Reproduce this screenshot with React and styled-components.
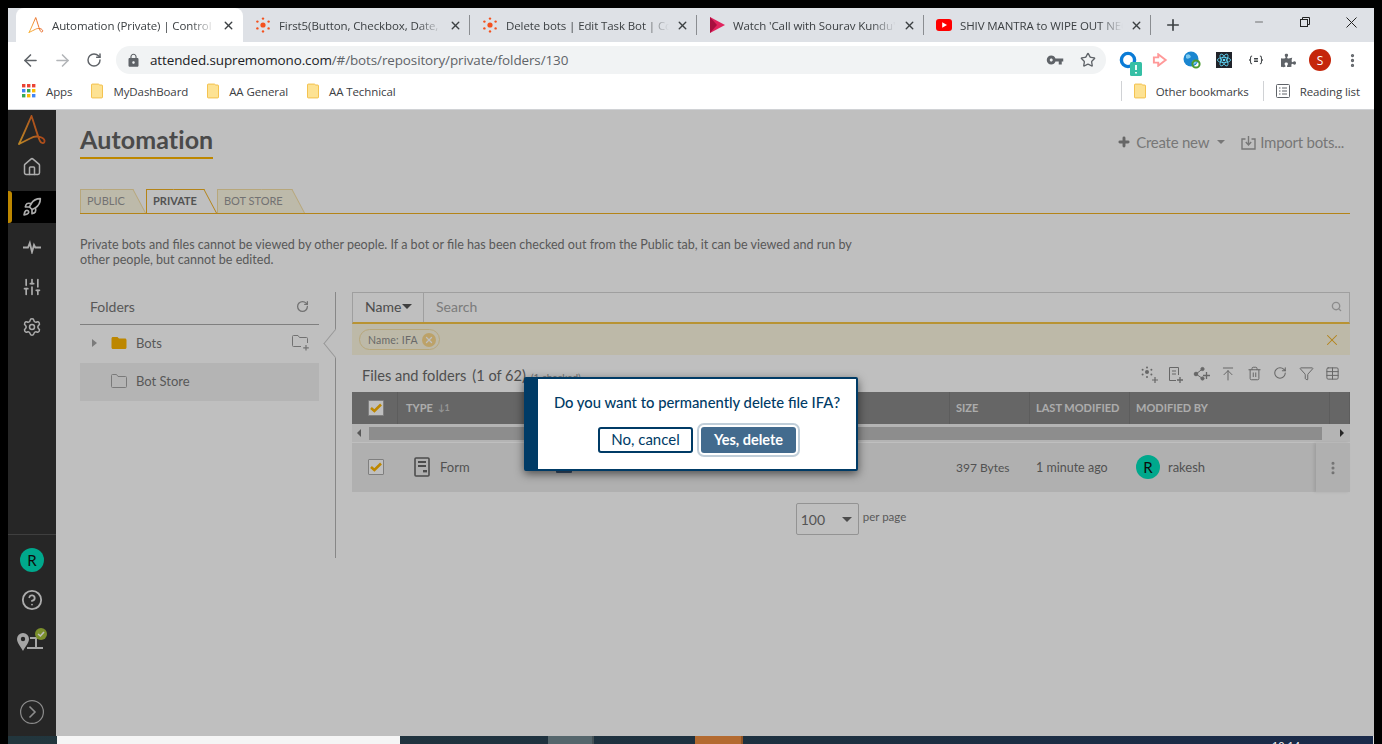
import React from 'react'
import styled, { createGlobalStyle } from 'styled-components'
import {
  ArrowLeft, ArrowRight, ArrowUpToLine, CircleHelp, EllipsisVertical, Funnel,
  House, Minus, Plus, Rocket, RotateCw, Search, Settings, SlidersVertical, Star, Table, Trash2, X,
} from 'lucide-react'
import { MdFolder, MdLock, MdVpnKey } from 'react-icons/md'
import { FaPuzzlePiece } from 'react-icons/fa'

const GlobalStyle = createGlobalStyle`
  html, body { margin: 0; padding: 0; background: #000; }
  * { box-sizing: border-box; }
`

const Frame = styled.div`
  width: 1382px;
  height: 744px;
  overflow: hidden;
  background: #000;
  padding: 8px 8px 0;
  display: flex;
  flex-direction: column;
  font-family: "Lato", "Liberation Sans", sans-serif;
`

/* browser chrome */
const TabStrip = styled.div`
  height: 34px;
  flex: none;
  background: #dee1e6;
  display: flex;
  align-items: stretch;
  padding-left: 8px;
  font-family: "Open Sans", "Liberation Sans", sans-serif;
`
const BrowserTab = styled.div`
  width: 227px;
  display: flex;
  align-items: center;
  padding: 0 8px 0 12px;
  background: ${p => (p.$active ? '#fff' : 'transparent')};
  border-radius: ${p => (p.$active ? '8px 8px 0 0' : '0')};
  position: relative;
  &::after {
    content: '';
    display: ${p => (p.$sep ? 'block' : 'none')};
    position: absolute;
    right: 0;
    top: 7px;
    bottom: 7px;
    width: 1px;
    background: #8a8d91;
  }
`
const FaviconSlot = styled.span`
  width: 16px;
  height: 16px;
  flex: none;
  margin-right: 8px;
  display: flex;
  align-items: center;
  justify-content: center;
`
const TabTitle = styled.span`
  flex: 1;
  min-width: 0;
  white-space: nowrap;
  overflow: hidden;
  font-size: 11.5px;
  letter-spacing: -0.1px;
  color: #3c4043;
  -webkit-mask-image: linear-gradient(to right, #000 85%, transparent 100%);
  mask-image: linear-gradient(to right, #000 85%, transparent 100%);
`
const TabClose = styled.span`
  width: 14px;
  height: 14px;
  flex: none;
  margin-left: 6px;
  color: #3c4043;
  display: flex;
  align-items: center;
  justify-content: center;
`
const NewTab = styled.span`
  width: 44px;
  color: #3c4043;
  display: flex;
  align-items: center;
  justify-content: center;
`
const WindowButtons = styled.div`
  margin-left: auto;
  display: flex;
  color: #222;
  padding-top: 1px;
`
const WindowButton = styled.span`
  width: 46px;
  height: 26px;
  display: flex;
  align-items: center;
  justify-content: center;
`
const Toolbar = styled.div`
  height: 36px;
  flex: none;
  background: #fff;
  display: flex;
  align-items: center;
  padding: 0 0 0 6px;
`
const NavButton = styled.span`
  width: 32px;
  height: 32px;
  flex: none;
  color: ${p => (p.$off ? '#b2b5b8' : '#5f6368')};
  display: flex;
  align-items: center;
  justify-content: center;
`
const AddressBar = styled.div`
  width: 990px;
  height: 28px;
  margin-left: 6px;
  border-radius: 14px;
  background: #f1f3f4;
  display: flex;
  align-items: center;
  padding: 0 2px 0 10px;
  color: #5f6368;
`
const Url = styled.span`
  margin-left: 9px;
  flex: 1;
  font-family: "Open Sans", "Liberation Sans", sans-serif;
  font-size: 13.45px;
  letter-spacing: -0.1px;
  color: #5f6368;
  b { font-weight: 400; color: #202124; }
`
const AddressIcon = styled.span`
  width: 33px;
  display: flex;
  justify-content: center;
  align-items: center;
`
const Extensions = styled.div`
  display: flex;
  align-items: center;
  margin-left: 6px;
`
const ExtSlot = styled.span`
  width: 32px;
  height: 24px;
  display: flex;
  align-items: center;
  justify-content: center;
  position: relative;
`
const ProfileBadge = styled.span`
  width: 22px;
  height: 22px;
  border-radius: 50%;
  background: #c5260b;
  color: #fff;
  font-size: 12px;
  font-family: "Open Sans", sans-serif;
  display: flex;
  align-items: center;
  justify-content: center;
`
const Bookmarks = styled.div`
  height: 32px;
  flex: none;
  background: #fff;
  border-bottom: 1px solid #d0d2d5;
  display: flex;
  align-items: center;
  padding: 0 0 5px 14px;
  font-family: "Open Sans", "Liberation Sans", sans-serif;
  font-size: 11.5px;
  letter-spacing: -0.1px;
  color: #3c4043;
`
const Bookmark = styled.span`
  display: flex;
  align-items: center;
  gap: 10px;
  margin-right: ${p => p.$mr ?? 19}px;
`
const BookmarkSep = styled.span`
  width: 1px;
  height: 20px;
  background: #d0d2d5;
  margin-right: ${p => p.$gap}px;
  margin-left: ${p => (p.$auto ? 'auto' : '0')};
`

/* page */
const Page = styled.div`
  flex: 1;
  min-height: 0;
  position: relative;
  display: flex;
  background: #fff;
`
const Sidebar = styled.nav`
  width: 48px;
  flex: none;
  background: #333;
  display: flex;
  flex-direction: column;
`
const LogoSlot = styled.div`
  height: 37px;
  padding: 5px 0 0 9px;
`
const SideIcon = styled.div`
  height: ${p => (p.$active ? 32 : 40)}px;
  margin: ${p => (p.$active ? '4px 0' : '0')};
  display: flex;
  align-items: center;
  justify-content: center;
  position: relative;
  background: ${p => (p.$active ? '#000' : 'transparent')};
  color: #e6e6e6;
  &::before {
    content: '';
    display: ${p => (p.$active ? 'block' : 'none')};
    position: absolute;
    left: 0;
    top: 0;
    bottom: 0;
    width: 4px;
    border-radius: 0 3px 3px 0;
    background: #fdb500;
  }
`
const SideBottom = styled.div`
  margin-top: auto;
  border-top: 1px solid #555;
  padding-top: 5px;
  display: flex;
  flex-direction: column;
`
const Avatar = styled.span`
  width: ${p => p.$size}px;
  height: ${p => p.$size}px;
  border-radius: 50%;
  background: #00e0bb;
  color: #111;
  font-size: 15px;
  display: flex;
  align-items: center;
  justify-content: center;
  flex: none;
`
const ExpandSlot = styled.div`
  margin-top: 40px;
  height: 36px;
  display: flex;
  justify-content: center;
`
const Main = styled.main`
  flex: 1;
  min-width: 0;
  padding: 13px 24px 0;
  color: #767676;
`
const HeaderRow = styled.header`
  display: flex;
  justify-content: space-between;
  align-items: flex-start;
`
const Title = styled.h1`
  margin: 0;
  font-size: 25px;
  line-height: 33px;
  letter-spacing: 0.1px;
  font-weight: 700;
  color: #636363;
  border-bottom: 2px solid #fdb500;
  padding-bottom: 1px;
`
const HeaderActions = styled.div`
  display: flex;
  align-items: center;
  margin: 10px 6px 0 0;
  font-size: 15px;
  letter-spacing: -0.25px;
  color: #9f9f9f;
`
const HeaderAction = styled.span`
  display: flex;
  align-items: center;
  gap: ${p => p.$gap}px;
`
const Caret = styled.i`
  display: inline-block;
  width: 0;
  height: 0;
  border-left: ${p => p.$s}px solid transparent;
  border-right: ${p => p.$s}px solid transparent;
  border-top: ${p => p.$s}px solid ${p => p.$c};
  margin-left: ${p => p.$ml || 0}px;
  margin-right: ${p => p.$mr || 0}px;
`
const TabRow = styled.div`
  margin-top: 30px;
  height: 25px;
  display: flex;
  border-bottom: 1px solid #f0b020;
`
const Tab = styled.div`
  position: relative;
  height: 24px;
  width: ${p => p.$w}px;
  padding-left: 7px;
  font-size: 11px;
  line-height: 24px;
  text-transform: uppercase;
  font-weight: ${p => (p.$active ? 700 : 400)};
  color: ${p => (p.$active ? '#6e6e6e' : '#999')};
  z-index: ${p => (p.$active ? 2 : 1)};
  span { position: relative; z-index: 2; }
  &::before, &::after {
    content: '';
    position: absolute;
    top: 0;
    bottom: 0;
    background: ${p => (p.$active ? '#fff' : '#fdf8e3')};
    border-top: 1px solid ${p => (p.$active ? '#f0b020' : '#f5dfa5')};
  }
  &::before {
    left: 0;
    right: 20px;
    border-left: 1px solid ${p => (p.$active ? '#f0b020' : '#f5dfa5')};
  }
  &::after {
    right: 0;
    width: 30px;
    border-right: 1px solid ${p => (p.$active ? '#f0b020' : '#f5dfa5')};
    transform: skewX(28deg);
    transform-origin: bottom right;
  }
`
const Description = styled.p`
  margin: 23px 0 0;
  width: 780px;
  font-size: 12.55px;
  line-height: 15px;
  color: #767676;
`
const Columns = styled.div`
  margin-top: 25px;
  display: flex;
  align-items: flex-start;
`
const FoldersPanel = styled.aside`
  width: 239px;
  flex: none;
`
const FoldersHead = styled.div`
  height: 33px;
  display: flex;
  align-items: center;
  justify-content: space-between;
  padding: 0 10px 3px;
  border-bottom: 1px solid #aaa;
  font-size: 14px;
  color: #767676;
  svg { color: #999; }
`
const FolderRow = styled.div`
  height: 38px;
  display: flex;
  align-items: center;
  padding: 0 0 2px 12px;
  font-size: 13px;
  background: ${p => (p.$selected ? '#f0f0f0' : 'transparent')};
  color: #767676;
`
const TreeArrow = styled.i`
  width: 0;
  height: 0;
  border-top: 4px solid transparent;
  border-bottom: 4px solid transparent;
  border-left: 5px solid #a5a5a5;
  margin-right: 13px;
`
const FolderLabel = styled.span`
  margin-left: ${p => p.$ml}px;
  flex: 1;
`
const TreeIndent = styled.span`
  width: 19px;
`
const AddFolder = styled.span`
  margin-right: 9px;
  display: flex;
`
const Divider = styled.div`
  width: 1px;
  height: 266px;
  flex: none;
  margin: 0 16px;
  background: #b5b5b5;
  position: relative;
  &::before {
    content: '';
    position: absolute;
    left: -9px;
    top: 42px;
    width: 18px;
    height: 18px;
    background: #fff;
    border-left: 1px solid #ccc;
    border-bottom: 1px solid #ccc;
    transform: rotate(45deg) skew(6deg, 6deg);
  }
`
const FilesPanel = styled.section`
  flex: 1;
  min-width: 0;
`
const SearchBar = styled.div`
  height: 32px;
  display: flex;
  border: 1px solid #d5d5d5;
  border-bottom: 2px solid #f6c544;
  font-size: 14px;
`
const SearchField = styled.div`
  width: 71px;
  display: flex;
  align-items: center;
  padding: 0 0 2px 12px;
  border-right: 1px solid #d5d5d5;
  color: #666;
`
const SearchInput = styled.div`
  flex: 1;
  display: flex;
  align-items: center;
  justify-content: space-between;
  padding: 0 7px 2px 12px;
  color: #a5a5a5;
`
const ChipBar = styled.div`
  height: 31px;
  background: #fcf7e0;
  display: flex;
  align-items: center;
  justify-content: space-between;
  padding: 0 9px 0 7px;
  color: #f0b020;
`
const Chip = styled.span`
  height: 21px;
  padding: 0 3px 0 8px;
  border: 1px solid #f5dfa5;
  border-radius: 11px;
  display: flex;
  align-items: center;
  gap: 4px;
  font-size: 10.5px;
  letter-spacing: 0.2px;
  color: #8c8c8c;
`
const ChipClose = styled.span`
  width: 14px;
  height: 14px;
  border-radius: 50%;
  background: #fbd98d;
  color: #fff;
  display: flex;
  align-items: center;
  justify-content: center;
`
const FilesHead = styled.div`
  height: 37px;
  display: flex;
  align-items: center;
  padding: 3px 5px 0 10px;
  font-size: 14.6px;
  color: #6a6a6a;
`
const Count = styled.span`
  margin-left: 6px;
`
const Checked = styled.small`
  margin: 3px 0 0 5px;
  font-size: 10px;
  color: #999;
`
const IconActions = styled.div`
  margin-left: auto;
  display: flex;
  color: #8a8a8a;
`
const IconAction = styled.span`
  width: 26px;
  display: flex;
  justify-content: center;
`
const columns = '46px 150px 402px 80px 100px 200px 20px'
const TableHead = styled.div`
  height: 32px;
  display: grid;
  grid-template-columns: ${columns};
  background: #888;
  font-size: 11px;
  font-weight: 700;
  color: #e6e6e6;
`
const HeadCell = styled.div`
  display: flex;
  align-items: center;
  gap: 5px;
  padding: 0 0 ${p => (p.$center ? 0 : 2)}px ${p => p.$pl ?? 6}px;
  justify-content: ${p => (p.$center ? 'center' : 'flex-start')};
  border-right: 1px solid #7c7c7c;
`
const SortMark = styled.span`
  font-size: 9px;
  color: #c8c8c8;
`
const CheckBox = styled.span`
  width: 16px;
  height: 16px;
  border: 1px solid #aaa;
  background: #fff;
  border-radius: 1px;
  display: flex;
  align-items: center;
  justify-content: center;
`
const ScrollTrack = styled.div`
  height: 18px;
  display: flex;
  align-items: center;
  background: #f1f1f1;
  padding: 0 6px 0 5px;
`
const ScrollThumb = styled.div`
  flex: 1;
  height: 13px;
  background: #bdbdbd;
  margin: 0 18px 0 8px;
`
const ScrollArrow = styled.i`
  width: 0;
  height: 0;
  border-top: 4px solid transparent;
  border-bottom: 4px solid transparent;
  ${p => (p.$right ? 'border-left: 4px solid #333;' : 'border-right: 4px solid #777;')}
`
const TableRow = styled.div`
  margin-top: 1px;
  height: 49px;
  display: grid;
  grid-template-columns: ${columns};
  background: #ebebeb;
  font-size: 13px;
  color: #6e6e6e;
`
const Cell = styled.div`
  display: flex;
  align-items: center;
  padding: 0 0 1px ${p => p.$pl ?? 6}px;
  gap: ${p => p.$gap || 0}px;
  justify-content: ${p => (p.$center ? 'center' : 'flex-start')};
  font-size: ${p => p.$fs || 13}px;
  white-space: nowrap;
`
const RowMenu = styled.div`
  margin-left: -14px;
  width: 34px;
  display: flex;
  align-items: center;
  justify-content: center;
  background: #ebebeb;
  color: #999;
  box-shadow: -2px 0 3px rgba(0, 0, 0, 0.1);
`
const Pager = styled.div`
  margin-top: 11px;
  display: flex;
  justify-content: center;
  align-items: flex-start;
  gap: 4px;
`
const PageSelect = styled.div`
  width: 63px;
  height: 32px;
  border: 1px solid #c4c4c4;
  border-radius: 2px;
  display: flex;
  align-items: center;
  justify-content: space-between;
  padding: 0 6px 0 4px;
  font-size: 14px;
  color: #707070;
`
const PerPage = styled.span`
  font-size: 11.5px;
  margin-top: 7px;
  color: #787878;
`

/* dialog */
const Overlay = styled.div`
  position: absolute;
  inset: 0;
  z-index: 10;
  background: rgba(0, 0, 0, 0.25);
  display: flex;
  justify-content: center;
  align-items: flex-start;
  padding-top: 267px;
`
const Dialog = styled.div`
  width: 334px;
  height: 94px;
  display: flex;
  background: #fff;
  border: 2px solid #003b66;
  border-left-width: 14px;
  border-radius: 2px;
  box-shadow: 0 3px 10px rgba(0, 0, 0, 0.55);
`
const DialogBody = styled.div`
  flex: 1;
  padding-top: 13px;
  display: flex;
  flex-direction: column;
  align-items: center;
`
const Question = styled.p`
  margin: 0;
  font-size: 14.8px;
  line-height: 20px;
  font-weight: 500;
  color: #003b66;
`
const ButtonRow = styled.div`
  display: flex;
  gap: 8px;
  margin-top: 15px;
`
const Button = styled.button`
  width: 95px;
  height: 26px;
  padding: 0 0 2px;
  border-radius: 3px;
  font-family: inherit;
  font-size: ${p => (p.$primary ? 14.5 : 15)}px;
  border: ${p => (p.$primary ? '0' : '2px solid #003b66')};
  background: ${p => (p.$primary ? '#436b8e' : '#fff')};
  color: ${p => (p.$primary ? '#fff' : '#003b66')};
  font-weight: ${p => (p.$primary ? 700 : 400)};
  box-shadow: ${p => (p.$primary ? '0 0 0 2px #fff, 0 0 0 4px #c0ced9' : 'none')};
`

/* taskbar */
const Taskbar = styled.footer`
  height: 8px;
  flex: none;
  display: flex;
  overflow: hidden;
  background: linear-gradient(to right, #22363d, #1d3040 60%, #1a2a4a);
  border-right: 1px solid #ddd;
`
const TaskStart = styled.span`
  width: 49px;
  flex: none;
`
const TaskWhite = styled.span`
  width: 343px;
  flex: none;
  background: #f5f5f5;
`
const TaskItem = styled.span`
  width: ${p => p.$w}px;
  margin-left: ${p => p.$ml}px;
  flex: none;
  background: ${p => p.$c};
  border-right: 2px solid rgba(0, 0, 0, 0.2);
`
const Clock = styled.span`
  margin-left: 529px;
  padding-top: 3px;
  font-family: "Open Sans", sans-serif;
  font-size: 11px;
  line-height: 14px;
  color: #fff;
`

const LogoMark = ({ size }) => (
  <svg width={size} height={size} viewBox="0 0 28 30" fill="none">
    <defs>
      <linearGradient id={`aa${size}`} x1="0" y1="1" x2="1" y2="0.6">
        <stop offset="0" stopColor="#f9b233" />
        <stop offset="0.55" stopColor="#f08a2c" />
        <stop offset="1" stopColor="#e2531f" />
      </linearGradient>
    </defs>
    <path
      d="M1 29 C5 21 10 9 13.5 1 C16 8 19 19 21.5 25 C23 29 27 29 26.5 25.5 C26 22 18 20 13 23 C9 25 5 27 1 29"
      stroke={`url(#aa${size})`}
      strokeWidth="1.8"
      strokeLinecap="round"
    />
  </svg>
)

const HubIcon = () => (
  <svg width="16" height="16" viewBox="0 0 16 16" fill="#f4511e">
    <circle cx="8" cy="8" r="2.6" />
    <circle cx="8" cy="1.6" r="1.2" />
    <circle cx="8" cy="14.4" r="1.2" />
    <circle cx="2.4" cy="4.6" r="1.2" />
    <circle cx="13.6" cy="4.6" r="1.2" />
    <circle cx="2.4" cy="11.4" r="1.2" />
    <circle cx="13.6" cy="11.4" r="1.2" />
  </svg>
)

const StreamIcon = () => (
  <svg width="16" height="16" viewBox="0 0 16 16">
    <path d="M1 0 L16 8 L1 16 Z" fill="#e0245e" />
    <path d="M1 0 L8 8 L1 16 Z" fill="#a80f3f" />
  </svg>
)

const YoutubeIcon = () => (
  <svg width="16" height="12" viewBox="0 0 16 12">
    <rect width="16" height="12" rx="3" fill="#f00" />
    <path d="M6.2 3.2 L11 6 L6.2 8.8 Z" fill="#fff" />
  </svg>
)

const AppsIcon = () => {
  const colors = ['#ea4335', '#ea4335', '#ea4335', '#4285f4', '#34a853', '#fbbc04', '#34a853', '#fbbc04', '#4285f4']
  return (
    <svg width="14" height="14" viewBox="0 0 14 14">
      {colors.map((c, i) => (
        <rect key={i} x={(i % 3) * 5} y={Math.floor(i / 3) * 5} width="3.4" height="3.4" fill={c} />
      ))}
    </svg>
  )
}

const BookmarkFolder = () => (
  <svg width="12" height="16" viewBox="0 0 13 16">
    <path d="M1.5 .5 H8 L9.5 1.5 H11.5 A1 1 0 0 1 12.5 2.5 V14.5 A1 1 0 0 1 11.5 15.5 H1.5 A1 1 0 0 1 .5 14.5 V1.5 A1 1 0 0 1 1.5 .5 Z" fill="#fde293" stroke="#f2bd42" />
  </svg>
)

const ReadingIcon = () => (
  <svg width="14" height="14" viewBox="0 0 14 14" fill="none" stroke="#5f6368">
    <rect x=".5" y=".5" width="13" height="13" rx="1" />
    <path d="M3 4 H4.5 M6 4 H11 M3 7 H4.5 M6 7 H11 M3 10 H4.5 M6 10 H11" />
  </svg>
)

const ExtRing = () => (
  <>
    <svg width="18" height="18" viewBox="0 0 18 18" fill="none">
      <circle cx="9" cy="9" r="6.6" stroke="#0a7bd6" strokeWidth="3.4" />
    </svg>
    <svg width="12" height="14" viewBox="0 0 12 14" style={{ position: 'absolute', right: 2, bottom: -4 }}>
      <rect width="12" height="14" rx="1.5" fill="#35bfa5" />
      <path d="M6 3 V8 M6 10 V11.4" stroke="#fff" strokeWidth="1.8" />
    </svg>
  </>
)

const ExtArrow = () => (
  <svg width="16" height="14" viewBox="0 0 18 16" fill="none" stroke="#f99" strokeWidth="2.2">
    <path d="M2 5 H7 L7 1.5 L15.5 8 L7 14.5 L7 11 H2 Z" />
  </svg>
)

const ExtGlobe = () => (
  <svg width="18" height="18" viewBox="0 0 18 18">
    <circle cx="8" cy="8" r="7.5" fill="#1a86d0" />
    <path d="M3 4 Q7 2 8 6 Q5 9 3 7 Z M9 10 Q13 8 14 11 Q11 15 9 13 Z" fill="#7cc9ef" />
    <circle cx="13" cy="13" r="3.6" fill="none" stroke="#4a9a2e" strokeWidth="2" />
  </svg>
)

const ExtReact = () => (
  <svg width="16" height="16" viewBox="0 0 16 16">
    <rect width="16" height="16" fill="#20232a" />
    <g fill="none" stroke="#61dafb" strokeWidth=".8">
      <ellipse cx="8" cy="8" rx="6.6" ry="2.6" />
      <ellipse cx="8" cy="8" rx="6.6" ry="2.6" transform="rotate(60 8 8)" />
      <ellipse cx="8" cy="8" rx="6.6" ry="2.6" transform="rotate(120 8 8)" />
    </g>
    <circle cx="8" cy="8" r="1.3" fill="#61dafb" />
  </svg>
)

const ExtBraces = () => (
  <svg width="14" height="10" viewBox="0 0 18 12" fill="none" stroke="#3c4043" strokeWidth="1.3">
    <path d="M4 1 Q2 1 2 3 V5 L.8 6 L2 7 V9 Q2 11 4 11 M14 1 Q16 1 16 3 V5 L17.2 6 L16 7 V9 Q16 11 14 11" />
    <path d="M6.5 4 H11.5 M6.5 6 H11.5 M6.5 8 H11.5" />
  </svg>
)

const RestoreIcon = () => (
  <svg width="10" height="10" viewBox="0 0 10 10" fill="none" stroke="#222">
    <rect x=".5" y="2.5" width="7" height="7" />
    <path d="M2.5 2.5 V.5 H9.5 V7.5 H7.5" />
  </svg>
)

const CloseThin = () => (
  <svg width="11" height="11" viewBox="0 0 11 11" stroke="#222">
    <path d="M.5 .5 L10.5 10.5 M10.5 .5 L.5 10.5" />
  </svg>
)

const PulseIcon = () => (
  <svg width="18" height="14" viewBox="0 0 18 14" fill="none" stroke="currentColor" strokeWidth="1.8">
    <path d="M0 7.5 H5 L6.8 3 L9 12 L11 5 L12.3 7.5 H18" />
  </svg>
)

const ExpandIcon = () => (
  <svg width="24" height="24" viewBox="0 0 24 24" fill="none" stroke="#bbb" strokeWidth="1.2">
    <circle cx="12" cy="12" r="11.4" />
    <path d="M9.5 6.5 L15 12 L9.5 17.5" strokeWidth="1.6" />
  </svg>
)

const OutlineFolder = () => (
  <svg width="16" height="14" viewBox="0 0 16 14" fill="none" stroke="#a3a3a3">
    <path d="M.5 1.5 A1 1 0 0 1 1.5 .5 H5.5 L7 2.5 H14.5 A1 1 0 0 1 15.5 3.5 V12.5 A1 1 0 0 1 14.5 13.5 H1.5 A1 1 0 0 1 .5 12.5 Z" />
  </svg>
)

const FolderPlus = () => (
  <svg width="18" height="16" viewBox="0 0 18 16" fill="none" stroke="#999">
    <path d="M9 11.5 H1.5 A1 1 0 0 1 .5 10.5 V1.5 A1 1 0 0 1 1.5 .5 H6 L7.5 2.5 H14.5 A1 1 0 0 1 15.5 3.5 V8" />
    <path d="M14 10 V15.5 M11.2 12.8 H16.8" strokeWidth="1.2" />
  </svg>
)

const ImportIcon = () => (
  <svg width="15" height="15" viewBox="0 0 15 15" fill="none" stroke="#9f9f9f" strokeWidth="1.4">
    <path d="M4.5 4 H1 V14 H14 V4 H10.5" />
    <path d="M7.5 1 V9.5 M4.8 7 L7.5 10 L10.2 7" />
  </svg>
)

const ClusterPlus = () => (
  <svg width="18" height="18" viewBox="0 0 18 18" fill="#8a8a8a">
    <circle cx="6" cy="6" r="2" />
    <circle cx="6" cy="1.4" r="1" />
    <circle cx="1.6" cy="3.8" r="1" />
    <circle cx="10.4" cy="3.8" r="1" />
    <circle cx="1.6" cy="8.4" r="1" />
    <circle cx="10.4" cy="8.4" r="1" />
    <circle cx="6" cy="11" r="1" />
    <path d="M14 11 V17 M11 14 H17" stroke="#8a8a8a" strokeWidth="1.2" />
  </svg>
)

const FilePlus = () => (
  <svg width="16" height="18" viewBox="0 0 16 18" fill="none" stroke="#8a8a8a">
    <path d="M8 14.5 H1.5 V1.5 H10.5 V9" />
    <path d="M4 5 H8 M4 8 H8" />
    <path d="M12 11 V17 M9 14 H15" strokeWidth="1.3" />
  </svg>
)

const SharePlus = () => (
  <svg width="18" height="18" viewBox="0 0 18 18" fill="#8a8a8a" stroke="#8a8a8a">
    <circle cx="3" cy="8" r="1.8" />
    <circle cx="9.5" cy="3" r="1.6" />
    <circle cx="9.5" cy="12.5" r="1.6" />
    <path d="M3 8 L9.5 3 M3 8 L9.5 12.5" fill="none" />
    <path d="M13.5 6 V13 M10 9.5 H17" strokeWidth="1.3" fill="none" />
  </svg>
)

const CheckMark = () => (
  <svg width="12" height="10" viewBox="0 0 12 10" fill="none" stroke="#fdb500" strokeWidth="2.6">
    <path d="M1 5 L4.4 8 L11 1.5" />
  </svg>
)

const FormIcon = () => (
  <svg width="16" height="20" viewBox="0 0 16 20" fill="none" stroke="#666" strokeWidth="1.6">
    <rect x="1" y="1" width="14" height="18" rx="1" />
    <path d="M4 5 H12 M4 9 H12" strokeWidth="2" />
    <rect x="9" y="13" width="4" height="2.4" fill="#666" strokeWidth="0" />
  </svg>
)

const NameIcon = () => (
  <svg width="16" height="12" viewBox="0 0 16 12">
    <rect width="16" height="12" rx="1" fill="#4a6a90" />
  </svg>
)

const BotLocation = () => (
  <svg width="32" height="26" viewBox="0 0 32 26">
    <path d="M7 6 A6 6 0 0 1 13 12 C13 16 9 20 7 24 C5 20 1 16 1 12 A6 6 0 0 1 7 6 Z" fill="#ddd" />
    <circle cx="7" cy="12" r="2.2" fill="#333" />
    <path d="M14 10 H21 V20 H27 V22 H11 V20 H19 V12 H14 Z" fill="#ddd" />
    <circle cx="25" cy="7" r="6" fill="#a4bf3a" />
    <path d="M22 7 L24.4 9 L28 5" stroke="#fff" strokeWidth="1.6" fill="none" />
  </svg>
)

const tabs = [
  { title: 'Automation (Private) | Control Room', icon: <LogoMark size={16} />, active: true },
  { title: 'First5(Button, Checkbox, Date, Dropdown)', icon: <HubIcon />, sep: true },
  { title: 'Delete bots | Edit Task Bot | Community', icon: <HubIcon />, sep: true },
  { title: "Watch 'Call with Sourav Kundu' Stream", icon: <StreamIcon />, sep: true },
  { title: 'SHIV MANTRA to WIPE OUT NEGATIVE', icon: <YoutubeIcon />, sep: true },
]

const App = () => (
  <Frame>
    <GlobalStyle />
    <TabStrip>
      {tabs.map(t => (
        <BrowserTab key={t.title} $active={t.active} $sep={t.sep}>
          <FaviconSlot>{t.icon}</FaviconSlot>
          <TabTitle>{t.title}</TabTitle>
          <TabClose><X size={13} strokeWidth={2.6} /></TabClose>
        </BrowserTab>
      ))}
      <NewTab><Plus size={18} strokeWidth={2.2} /></NewTab>
      <WindowButtons>
        <WindowButton><Minus size={12} strokeWidth={1.2} color="#222" /></WindowButton>
        <WindowButton><RestoreIcon /></WindowButton>
        <WindowButton><CloseThin /></WindowButton>
      </WindowButtons>
    </TabStrip>
    <Toolbar>
      <NavButton><ArrowLeft size={19} /></NavButton>
      <NavButton $off><ArrowRight size={19} /></NavButton>
      <NavButton><RotateCw size={16} strokeWidth={2.2} /></NavButton>
      <AddressBar>
        <MdLock size={15} />
        <Url><b>attended.supremomono.com</b>/#/bots/repository/private/folders/130</Url>
        <AddressIcon><MdVpnKey size={18} /></AddressIcon>
        <AddressIcon><Star size={16} /></AddressIcon>
      </AddressBar>
      <Extensions>
        <ExtSlot><ExtRing /></ExtSlot>
        <ExtSlot><ExtArrow /></ExtSlot>
        <ExtSlot><ExtGlobe /></ExtSlot>
        <ExtSlot><ExtReact /></ExtSlot>
        <ExtSlot><ExtBraces /></ExtSlot>
        <ExtSlot><FaPuzzlePiece size={15} color="#5f6368" /></ExtSlot>
        <ExtSlot><ProfileBadge>S</ProfileBadge></ExtSlot>
        <ExtSlot><EllipsisVertical size={17} color="#5f6368" strokeWidth={2.6} /></ExtSlot>
      </Extensions>
    </Toolbar>
    <Bookmarks>
      <Bookmark><AppsIcon />Apps</Bookmark>
      <Bookmark><BookmarkFolder />MyDashBoard</Bookmark>
      <Bookmark><BookmarkFolder />AA General</Bookmark>
      <Bookmark><BookmarkFolder />AA Technical</Bookmark>
      <BookmarkSep $auto $gap={12} />
      <Bookmark $mr={14}><BookmarkFolder />Other bookmarks</Bookmark>
      <BookmarkSep $gap={12} />
      <Bookmark $mr={14}><ReadingIcon />Reading list</Bookmark>
    </Bookmarks>
    <Page>
      <Sidebar>
        <LogoSlot><LogoMark size={30} /></LogoSlot>
        <SideIcon><House size={20} strokeWidth={1.8} /></SideIcon>
        <SideIcon $active><Rocket size={20} strokeWidth={2} /></SideIcon>
        <SideIcon><PulseIcon /></SideIcon>
        <SideIcon><SlidersVertical size={20} strokeWidth={2} /></SideIcon>
        <SideIcon><Settings size={20} strokeWidth={1.8} /></SideIcon>
        <SideBottom>
          <SideIcon><Avatar $size={24}>R</Avatar></SideIcon>
          <SideIcon><CircleHelp size={22} strokeWidth={2} /></SideIcon>
          <SideIcon><BotLocation /></SideIcon>
          <ExpandSlot><ExpandIcon /></ExpandSlot>
        </SideBottom>
      </Sidebar>
      <Main>
        <HeaderRow>
          <Title>Automation</Title>
          <HeaderActions>
            <HeaderAction $gap={5}><Plus size={14} strokeWidth={5} color="#888" />Create new</HeaderAction>
            <Caret $s={4} $c="#9f9f9f" $ml={8} $mr={16} />
            <HeaderAction $gap={4}><ImportIcon />Import bots...</HeaderAction>
          </HeaderActions>
        </HeaderRow>
        <TabRow>
          <Tab $w={66}><span>Public</span></Tab>
          <Tab $w={71} $active><span>Private</span></Tab>
          <Tab $w={88}><span>Bot Store</span></Tab>
        </TabRow>
        <Description>
          Private bots and files cannot be viewed by other people. If a bot or file has been checked out from the Public tab, it can be viewed and run by other people, but cannot be edited.
        </Description>
        <Columns>
          <FoldersPanel>
            <FoldersHead>Folders<RotateCw size={13} strokeWidth={2.4} /></FoldersHead>
            <FolderRow>
              <TreeArrow />
              <MdFolder size={18} color="#fdb500" />
              <FolderLabel $ml={8}>Bots</FolderLabel>
              <AddFolder><FolderPlus /></AddFolder>
            </FolderRow>
            <FolderRow $selected>
              <TreeIndent />
              <OutlineFolder />
              <FolderLabel $ml={9}>Bot Store</FolderLabel>
            </FolderRow>
          </FoldersPanel>
          <Divider />
          <FilesPanel>
            <SearchBar>
              <SearchField>Name<Caret $s={5} $c="#555" $ml={1} /></SearchField>
              <SearchInput>Search<Search size={11} strokeWidth={3} color="#bbb" /></SearchInput>
            </SearchBar>
            <ChipBar>
              <Chip>Name: IFA<ChipClose><X size={10} strokeWidth={3} /></ChipClose></Chip>
              <X size={18} strokeWidth={1.4} />
            </ChipBar>
            <FilesHead>
              Files and folders
              <Count>(1 of 62)</Count>
              <Checked>(1 checked)</Checked>
              <IconActions>
                <IconAction><ClusterPlus /></IconAction>
                <IconAction><FilePlus /></IconAction>
                <IconAction><SharePlus /></IconAction>
                <IconAction><ArrowUpToLine size={16} strokeWidth={1.5} /></IconAction>
                <IconAction><Trash2 size={15} strokeWidth={1.6} /></IconAction>
                <IconAction><RotateCw size={14} strokeWidth={1.8} /></IconAction>
                <IconAction><Funnel size={15} strokeWidth={1.6} /></IconAction>
                <IconAction><Table size={15} strokeWidth={1.6} /></IconAction>
              </IconActions>
            </FilesHead>
            <TableHead>
              <HeadCell $center $pl={2}><CheckBox><CheckMark /></CheckBox></HeadCell>
              <HeadCell $pl={8}>TYPE<SortMark>↓1</SortMark></HeadCell>
              <HeadCell />
              <HeadCell>SIZE</HeadCell>
              <HeadCell>LAST MODIFIED</HeadCell>
              <HeadCell>MODIFIED BY</HeadCell>
              <HeadCell />
            </TableHead>
            <ScrollTrack>
              <ScrollArrow />
              <ScrollThumb />
              <ScrollArrow $right />
            </ScrollTrack>
            <TableRow>
              <Cell $center $pl={2}><CheckBox><CheckMark /></CheckBox></Cell>
              <Cell $pl={16} $gap={10}><FormIcon />Form</Cell>
              <Cell $pl={8}><NameIcon /></Cell>
              <Cell $fs={12}>397 Bytes</Cell>
              <Cell $fs={12.5}>1 minute ago</Cell>
              <Cell $gap={8}><Avatar $size={24}>R</Avatar>rakesh</Cell>
              <RowMenu><EllipsisVertical size={16} strokeWidth={2.6} /></RowMenu>
            </TableRow>
            <Pager>
              <PageSelect>100<Caret $s={5} $c="#666" /></PageSelect>
              <PerPage>per page</PerPage>
            </Pager>
          </FilesPanel>
        </Columns>
      </Main>
      <Overlay>
        <Dialog>
          <DialogBody>
            <Question>Do you want to permanently delete file IFA?</Question>
            <ButtonRow>
              <Button>No, cancel</Button>
              <Button $primary>Yes, delete</Button>
            </ButtonRow>
          </DialogBody>
        </Dialog>
      </Overlay>
    </Page>
    <Taskbar>
      <TaskStart />
      <TaskWhite />
      <TaskItem $w={46} $ml={148} $c="#55666c" />
      <TaskItem $w={48} $ml={101} $c="#b36a30" />
      <Clock>10:14</Clock>
    </Taskbar>
  </Frame>
)

export default App
